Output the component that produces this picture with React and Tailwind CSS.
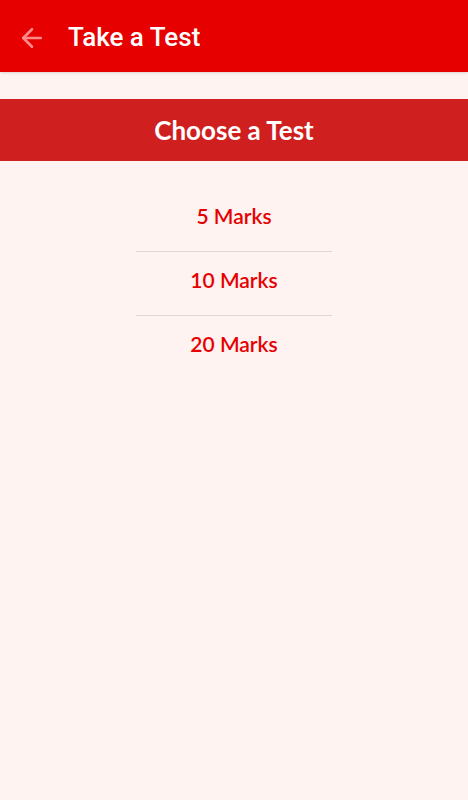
import { ArrowLeft } from "lucide-react";

const marks = ["5 Marks", "10 Marks", "20 Marks"];

export default function App() {
  return (
    <div className="min-h-[800px] bg-[#fff3f2]">
      <div className="flex h-[72px] items-center bg-[#e60000] pl-[17px] pt-[3px] shadow-sm">
        <ArrowLeft className="h-[30px] w-[30px] text-[#ff8a8a]" strokeWidth={2.1} />
        <div
          className="ml-[21px] text-[26px] font-medium text-white"
          style={{ fontFamily: "Roboto, sans-serif" }}
        >
          Take a Test
        </div>
      </div>

      <div
        className="mt-[27px] flex h-[62px] items-center justify-center bg-[#cf1f1f] text-[26px] font-bold text-white"
        style={{ fontFamily: "Lato, sans-serif" }}
      >
        Choose a Test
      </div>

      <div className="mt-[27px] flex flex-col items-center" style={{ fontFamily: "Lato, sans-serif" }}>
        {marks.map((m, i) => (
          <div
            key={m}
            className={
              "flex h-16 w-[196px] items-center justify-center pb-[8px] text-[21px] font-semibold text-[#e60000] " +
              (i < marks.length - 1 ? "border-b border-[#ddd8d6]" : "")
            }
          >
            {m}
          </div>
        ))}
      </div>
    </div>
  );
}
